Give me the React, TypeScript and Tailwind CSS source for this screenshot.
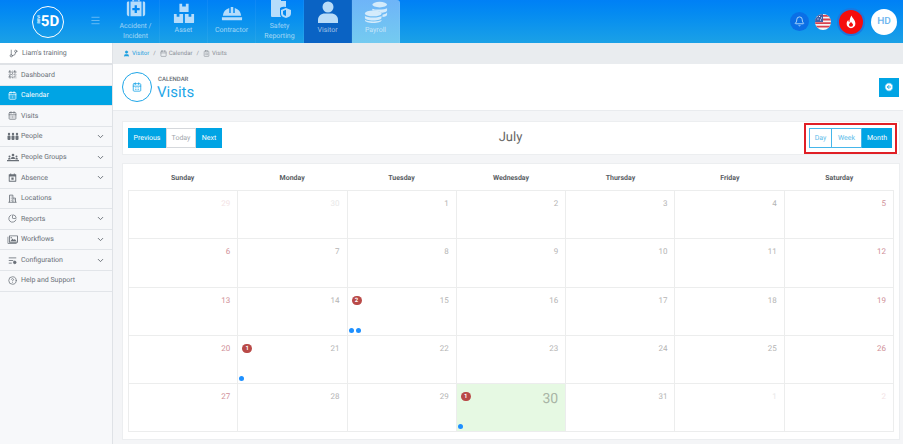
import React from 'react';
import {
  Menu, GitBranch, QrCode, CalendarDays, ChevronDown, PieChart,
  CircleHelp, Bell, User, Calendar, ClipboardList, CircleArrowLeft,
} from 'lucide-react';

const font = { fontFamily: 'Roboto, "Liberation Sans", sans-serif' };

function MedicalIcon() {
  return (
    <svg viewBox="0 0 24 24" className="w-[22px] h-[22px]" fill="#b5dcfb">
      <path d="M8 3h8v3h-1.600V4.600H9.600V6H8z" />
      <path d="M3 6h1.600v16H4a2 2 0 0 1-2-2V8a2 2 0 0 1 1-2zM21 6h-1.600v16h.6a2 2 0 0 0 2-2V8a2 2 0 0 0-1-2z" />
      <path fillRule="evenodd" d="M6 6h12v16H6zm4.500 4v3H8v2.500h2.500v3H13v-3h3V13h-3v-3z" />
    </svg>
  );
}

function BoxesIcon() {
  return (
    <svg viewBox="0 0 24 24" className="w-[22px] h-[22px]" fill="#b5dcfb">
      <path d="M7 2h3v3h4V2h3v9H7z" />
      <path d="M1 13h3v3h3v-3h4v10H2a1 1 0 0 1-1-1zM13 13h4v3h3v-3h3v9a1 1 0 0 1-1 1h-9z" />
    </svg>
  );
}

function HelmetIcon() {
  return (
    <svg viewBox="0 0 24 24" className="w-[22px] h-[22px]" fill="#b5dcfb">
      <path d="M2 15a10 10 0 0 1 7-8.500V12h1.600V5.500h2.800V12H15V6.500A10 10 0 0 1 22 15z" />
      <path d="M1 16.500h22V19a1 1 0 0 1-1 1H2a1 1 0 0 1-1-1z" />
    </svg>
  );
}

function SafetyIcon() {
  return (
    <svg viewBox="0 0 24 24" className="w-[24px] h-[24px]" fill="#b5dcfb">
      <path d="M4 1h9v6h5v6a7 7 0 0 0-6 1v6c0 1 .4 2 1 3H4a1 1 0 0 1-1-1V2a1 1 0 0 1 1-1zM15 1l3 4.500h-3z" />
      <path fillRule="evenodd" d="M18 14l5 2v3.500c0 2.500-2.200 3.800-5 4.500-2.800-.7-5-2-5-4.500V16zm0 1.800L15 17v2.500c0 1.300 1.200 2 3 2.600z" />
    </svg>
  );
}

function PersonIcon() {
  return (
    <svg viewBox="0 0 24 24" className="w-[24px] h-[24px]" fill="#b9dcf8">
      <circle cx="12" cy="7" r="5.500" />
      <path d="M2 23v-3c0-4 3-6.500 7-6.500h6c4 0 7 2.500 7 6.500v3z" />
    </svg>
  );
}

function CoinsIcon() {
  return (
    <svg viewBox="0 0 26 24" className="w-[24px] h-[24px]" fill="#d4ebfb">
      <ellipse cx="17" cy="4" rx="8" ry="3" />
      <path d="M9 8.500c2 1.300 14 1.300 16-.5v2c0 1.500-3 2.600-6 2.900-2-1.600-6-2.400-10-2.400z" />
      <path d="M20 15c2.500-.4 5-1.400 5-2.600v2.200c0 1.400-2 2.400-5 2.800z" />
      <ellipse cx="10" cy="13.500" rx="9" ry="3.200" />
      <path d="M1 16c1.500 2.600 16.500 2.600 18 0v2.200c0 1.800-4 3-9 3s-9-1.200-9-3z" />
      <path d="M1 20.500c2 2.300 16 2.300 18 0V21c0 1.800-4 3-9 3s-9-1.200-9-3z" />
    </svg>
  );
}

function FlagIcon() {
  return (
    <svg viewBox="0 0 16 16" className="w-4 h-4 rounded-full">
      <rect width="16" height="16" fill="#f4f4f4" />
      <path d="M0 1h16v1.800H0zM0 4.600h16v1.800H0zM0 8.200h16V10H0zM0 11.800h16v1.800H0z" fill="#d9414e" />
      <rect width="8" height="8" fill="#3f5fa8" />
      <path d="M1.500 2h1v1h-1zM4 2h1v1H4zM6 3.500h1v1H6zM2.500 4.500h1v1h-1zM5 5.500h1v1H5z" fill="#fff" />
    </svg>
  );
}

function FlameIcon() {
  return (
    <svg viewBox="0 0 24 24" className="w-[14px] h-[14px]">
      <path d="M13 1c.5 4 6.500 7 6.500 14a7.500 7.500 0 0 1-15 0c0-3 1.500-5 3-6.500 0 2 .6 3.200 1.800 3.800C9.500 9 10.500 4 13 1z" fill="#fff" />
      <path d="M12 11.500c.5 2 3.500 3 3.500 5.200a3.500 3.500 0 0 1-7 0c0-2.200 3-3 3.500-5.200z" fill="#f50d0d" />
    </svg>
  );
}

function PeopleIcon({ className }: { className?: string }) {
  return (
    <svg viewBox="0 0 24 16" className={className} fill="currentColor">
      <circle cx="4" cy="3" r="2.400" />
      <circle cx="12" cy="3" r="2.400" />
      <circle cx="20" cy="3" r="2.400" />
      <rect x="1" y="6" width="6" height="9" rx="2" />
      <rect x="9" y="6" width="6" height="9" rx="2" />
      <rect x="17" y="6" width="6" height="9" rx="2" />
    </svg>
  );
}

function GroupsIcon({ className }: { className?: string }) {
  return (
    <svg viewBox="0 0 24 16" className={className} fill="currentColor">
      <circle cx="12" cy="3" r="2.600" />
      <circle cx="5" cy="6" r="2" />
      <circle cx="19" cy="6" r="2" />
      <path d="M8 11c0-3 1.500-4.500 4-4.500s4 1.500 4 4.500z" />
      <path d="M2 12c0-2 1.200-3.500 3-3.500 1 0 1.500.4 2 1V12zM17 12V9.500c.5-.6 1-1 2-1 1.800 0 3 1.500 3 3.500z" />
      <rect x="0" y="13" width="24" height="2.500" />
    </svg>
  );
}

function PhotoIcon({ className }: { className?: string }) {
  return (
    <svg viewBox="0 0 24 20" className={className} fill="currentColor">
      <path fillRule="evenodd" d="M4 1h18a1 1 0 0 1 1 1v14a1 1 0 0 1-1 1H4a1 1 0 0 1-1-1V2a1 1 0 0 1 1-1zm1 2v12h16V3z" />
      <path d="M6 14l5-6 3 3 2-2 4 5z" />
      <circle cx="8" cy="6" r="1.500" />
      <path d="M0 4h1.500v14H20v1.500H1a1 1 0 0 1-1-1z" />
    </svg>
  );
}

function AbsenceIcon({ className }: { className?: string }) {
  return (
    <svg viewBox="0 0 24 24" className={className} fill="currentColor">
      <path fillRule="evenodd" d="M6 1h2.500v2h7V1H18v2h3a1 1 0 0 1 1 1v18a1 1 0 0 1-1 1H3a1 1 0 0 1-1-1V4a1 1 0 0 1 1-1h3zM4.500 9v11.500h15V9z" />
      <rect x="9" y="12" width="6" height="6" />
    </svg>
  );
}

function LocationsIcon({ className }: { className?: string }) {
  return (
    <svg viewBox="0 0 24 24" fill="none" stroke="currentColor" strokeWidth="2.200" className={className}>
      <path d="M4 22V3h9v19M13 11h7v11M1 22h22M7.500 8h2M7.500 12.500h2M7.500 17h2M16 15.500h1.500" />
    </svg>
  );
}

function ConfigIcon({ className }: { className?: string }) {
  return (
    <svg viewBox="0 0 24 24" fill="none" stroke="currentColor" strokeWidth="2.200" className={className}>
      <path d="M2 5h20M2 12h12M2 19h8" />
      <circle cx="18" cy="17" r="3.500" fill="currentColor" />
    </svg>
  );
}

function Tab({ label, icon, tone }: { label: string[]; icon: React.ReactNode; tone?: string }) {
  return (
    <div className={`w-12 h-full shrink-0 flex flex-col items-center border-r border-white/5 ${tone ?? ''}`}>
      <div className={label.length > 1 ? 'h-[18px] flex items-end overflow-hidden' : 'h-[24px] flex items-end overflow-hidden'}>{icon}</div>
      <div className={`text-[7px] leading-[10px] text-center text-white/60 ${label.length > 1 ? 'mt-[3px]' : 'mt-[1px]'}`}>
        {label.map((l) => (
          <div key={l}>{l}</div>
        ))}
      </div>
    </div>
  );
}

function Header() {
  return (
    <div className="h-[43px] flex bg-gradient-to-b from-[#0080f6] to-[#1ba1e6]">
      <div className="w-[112px] shrink-0 flex items-center">
        <div className="ml-[32px] w-[32px] h-[32px] rounded-full border-[1.500px] border-white flex items-center justify-center text-white">
          <span className="text-[4px] leading-none -rotate-90 w-[3px] font-semibold">BBW</span>
          <span className="text-[15px] leading-none font-bold ml-[1px]">5D</span>
        </div>
        <Menu className="w-[11px] h-[11px] ml-[26px] -mt-[2px] text-white/40" />
      </div>
      <Tab label={['Accident /', 'Incident']} icon={<MedicalIcon />} />
      <Tab label={['Asset']} icon={<BoxesIcon />} />
      <Tab label={['Contractor']} icon={<HelmetIcon />} />
      <Tab label={['Safety', 'Reporting']} icon={<SafetyIcon />} />
      <Tab label={['Visitor']} icon={<PersonIcon />} tone="bg-[#0a63c4]" />
      <Tab label={['Payroll']} icon={<CoinsIcon />} tone="bg-gradient-to-b from-[#6eb4f8] to-[#74cbf0] rounded-tr-[3px]" />
      <div className="ml-auto flex items-center pr-[6px]">
        <div className="w-[19px] h-[19px] rounded-full bg-[#0a6fe6] flex items-center justify-center">
          <Bell className="w-[11px] h-[11px] text-[#b9dcf8]" strokeWidth={2} />
        </div>
        <div className="ml-[6px]"><FlagIcon /></div>
        <div className="ml-[8px] w-[24px] h-[24px] rounded-full bg-[#f50d0d] ring-2 ring-[#1a78e0] flex items-center justify-center">
          <FlameIcon />
        </div>
        <div className="ml-[8px] w-[26px] h-[26px] rounded-full bg-white flex items-center justify-center text-[#6cb6ef] text-[10px] font-medium">HD</div>
      </div>
    </div>
  );
}

const sideItems = [
  { label: 'Dashboard', icon: QrCode },
  { label: 'Calendar', icon: CalendarDays, active: true },
  { label: 'Visits', icon: CalendarDays },
  { label: 'People', icon: PeopleIcon, more: true, wide: true },
  { label: 'People Groups', icon: GroupsIcon, more: true, wide: true },
  { label: 'Absence', icon: AbsenceIcon, more: true },
  { label: 'Locations', icon: LocationsIcon },
  { label: 'Reports', icon: PieChart, more: true },
  { label: 'Workflows', icon: PhotoIcon, more: true, wide: true },
  { label: 'Configuration', icon: ConfigIcon, more: true },
  { label: 'Help and Support', icon: CircleHelp },
];

function Sidebar() {
  return (
    <div className="w-[113px] shrink-0 bg-[#f7f8fa] border-r border-[#dfe2e6] text-[7px] text-[#6a7078]">
      <div className="h-[22px] bg-white border-b-2 border-[#dfe2e6] flex items-center pl-[8px] gap-[3px]">
        <GitBranch className="w-[9px] h-[9px] ml-[1px]" />
        <span className="ml-[1px]">Liam's training</span>
      </div>
      {sideItems.map((it) => {
        const Ic = it.icon;
        return (
          <div
            key={it.label}
            className={`h-[20.600px] flex items-center pl-[8px] pr-[7px] border-b border-[#e2e5e9] ${it.active ? 'bg-[#00a4e4] text-white' : ''}`}
          >
            <span className="w-[13px] shrink-0 flex items-center">
              <Ic className={it.wide ? 'w-[12px] h-[9px] -ml-[1px]' : 'w-[9px] h-[9px]'} />
            </span>
            <span>{it.label}</span>
            {it.more && <ChevronDown className="w-[9px] h-[9px] ml-auto" strokeWidth={2.500} />}
          </div>
        );
      })}
    </div>
  );
}

const days = ['Sunday', 'Monday', 'Tuesday', 'Wednesday', 'Thursday', 'Friday', 'Saturday'];

const cells = [29, 30, 1, 2, 3, 4, 5, 6, 7, 8, 9, 10, 11, 12, 13, 14, 15, 16, 17, 18, 19, 20, 21, 22, 23, 24, 25, 26, 27, 28, 29, 30, 31, 1, 2];

// badge and dots per cell index
const marks: Record<number, { badge: number; dots: number }> = {
  16: { badge: 2, dots: 2 },
  22: { badge: 1, dots: 1 },
  31: { badge: 1, dots: 1 },
};

function Cell({ n, i }: { n: number; i: number }) {
  const m = marks[i];
  const outside = i < 2 || i > 32;
  const weekend = i % 7 === 0 || i % 7 === 6;
  const today = i === 31;
  let colour = 'text-[#b4b4b4]';
  if (weekend) colour = 'text-[#cf8f98]';
  if (outside) colour = weekend ? 'text-[#f3e3e5]' : 'text-[#e8e8e8]';
  return (
    <div className={`relative border-r border-b border-[#eceded] h-[48.300px] ${today ? 'bg-[#e6f9e3]' : ''}`}>
      <div className={`text-right pr-[7px] ${today ? 'text-[14px] leading-[16px] pt-[7px] text-[#a9b5a6]' : `text-[8px] leading-[12px] pt-[7px] ${colour}`}`}>{n}</div>
      {m && (
        <span className="absolute left-[4px] top-[8px] w-[10px] h-[9px] rounded-full bg-[#b94a48] text-white text-[6px] leading-[9px] font-bold text-center">{m.badge}</span>
      )}
      {m && (
        <div className="absolute left-[1px] bottom-[2px] flex gap-[2px]">
          {Array.from({ length: m.dots }).map((_, k) => (
            <span key={k} className="w-[5px] h-[5px] rounded-full bg-[#1e90ff]" />
          ))}
        </div>
      )}
    </div>
  );
}

function Main() {
  return (
    <div className="flex-1 min-w-0 bg-[#f4f5f7]">
      <div className="h-[21px] bg-[#e9ecef] flex items-center pl-[10px] text-[6px] text-[#8a9097]">
        <User className="w-[7px] h-[7px] text-[#1a9fe0] fill-[#1a9fe0]" />
        <span className="ml-[2px] text-[#1a9fe0]">Visitor</span>
        <span className="mx-[4px]">/</span>
        <Calendar className="w-[7px] h-[7px]" />
        <span className="ml-[2px]">Calendar</span>
        <span className="mx-[4px]">/</span>
        <ClipboardList className="w-[7px] h-[7px]" />
        <span className="ml-[2px]">Visits</span>
      </div>
      <div className="h-[47px] bg-white border-b border-[#e9ebee] flex items-center pl-[9px] pr-[4px]">
        <div className="w-[30px] h-[30px] rounded-full border border-[#1ea6e8] flex items-center justify-center">
          <CalendarDays className="w-[10px] h-[10px] text-[#1ea6e8]" />
        </div>
        <div className="ml-[5px] pt-[2px]">
          <div className="text-[6px] leading-[7px] text-[#666c73] font-medium pl-[1px]">CALENDAR</div>
          <div className="text-[15px] leading-[18px] text-[#1ea6e8]">Visits</div>
        </div>
        <div className="ml-auto w-[20px] h-[19px] bg-[#00a4e4] flex items-center justify-center">
          <CircleArrowLeft className="w-[10px] h-[10px] text-[#00a4e4] fill-white" strokeWidth={2} />
        </div>
      </div>
      <div className="pl-[9px] pr-[3px] pt-[10px]">
        <div className="relative h-[34px] bg-white border border-[#eceef0] flex items-center justify-between pl-[5px] pr-[2px] text-[7px]">
          <div className="flex h-[20px] items-stretch">
            <div className="w-[38px] bg-[#00a4e4] text-white flex items-center justify-center">Previous</div>
            <div className="w-[30px] bg-white text-[#a0a5ab] border border-[#d5d8dc] flex items-center justify-center">Today</div>
            <div className="w-[26px] bg-[#00a4e4] text-white flex items-center justify-center">Next</div>
          </div>
          <div className="text-[13px] text-[#666666] pr-[5px]">July</div>
          <div className="border-2 border-[#e01f26] h-[31px] px-[3px] flex items-center">
            <div className="flex h-[20px] items-stretch text-[#5cbcea]">
              <div className="w-[23px] border border-[#46b6ea] flex items-center justify-center">Day</div>
              <div className="w-[30px] border-y border-r border-[#46b6ea] flex items-center justify-center">Week</div>
              <div className="w-[30px] bg-[#00a4e4] text-white flex items-center justify-center">Month</div>
            </div>
          </div>
        </div>
        <div className="mt-[8px] bg-white border border-[#eceef0] px-[5px] pb-[7px]">
          <div className="grid grid-cols-7 h-[26px] pt-[2px] items-center text-center text-[7px] font-bold text-[#5a5e64]">
            {days.map((d) => (
              <div key={d}>{d}</div>
            ))}
          </div>
          <div className="grid grid-cols-7 border-t border-l border-[#eceded]">
            {cells.map((n, i) => (
              <Cell key={i} n={n} i={i} />
            ))}
          </div>
        </div>
      </div>
    </div>
  );
}

export default function App() {
  return (
    <div className="w-[903px] h-[444px] overflow-hidden flex flex-col bg-white antialiased [text-rendering:geometricPrecision]" style={font}>
      <Header />
      <div className="flex flex-1 min-h-0">
        <Sidebar />
        <Main />
      </div>
    </div>
  );
}
